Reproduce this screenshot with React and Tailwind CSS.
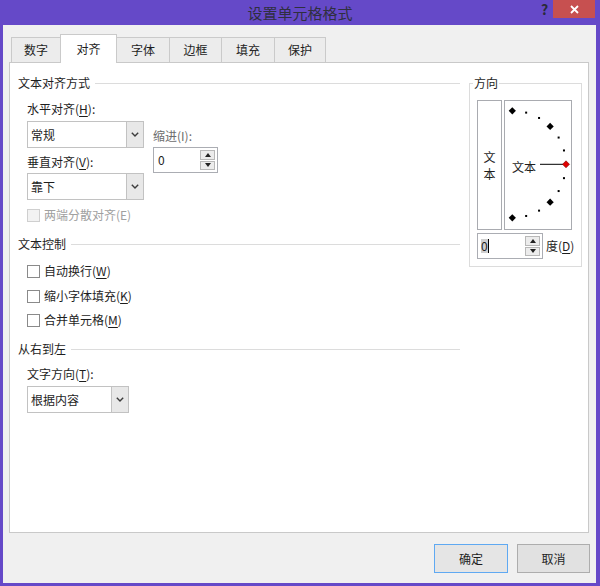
import React from 'react'

const TABS = [
    { label: '数字', cls: 'w-[50px]' },
    { label: '对齐', cls: 'w-[57px] -ml-px', active: true },
    { label: '字体', cls: 'w-[54px] -ml-px' },
    { label: '边框', cls: 'w-[53px] -ml-px' },
    { label: '填充', cls: 'w-[54px] -ml-px' },
    { label: '保护', cls: 'w-[52px] -ml-px' },
]

// underlined access key, e.g. 水平对齐(H)
function Key({ text, k }) {
    return (
        <span>
            {text}(<span className="underline underline-offset-2">{k}</span>)
        </span>
    )
}

function GroupTitle({ children }) {
    return (
        <div className="flex items-center h-[16px]">
            <span>{children}</span>
            <div className="ml-[5px] h-px flex-1 bg-[#dcdcdc]" />
        </div>
    )
}

function Chevron() {
    return (
        <svg width="8" height="5" viewBox="0 0 8 5">
            <path d="M0.8 0.8 L4 4 L7.2 0.8" fill="none" stroke="#3c3c3c" strokeWidth="1.4" />
        </svg>
    )
}

function Select({ value, width }) {
    return (
        <div className={`flex h-[27px] border border-[#c2c2c2] bg-white ${width}`}>
            <div className="flex-1 flex items-center pl-[3px]">{value}</div>
            <div className="w-[17px] flex items-center justify-center border-l border-[#c2c2c2] bg-[#e8e8e8]">
                <Chevron />
            </div>
        </div>
    )
}

function SpinButtons() {
    return (
        <div className="flex flex-col w-[15px] my-[2px] mr-[2px] gap-px">
            <div className="flex-1 flex items-center justify-center border border-[#b8b8b8] bg-[#ececec]">
                <svg width="6" height="4" viewBox="0 0 6 4"><path d="M0 4 L3 0 L6 4 Z" fill="#222" /></svg>
            </div>
            <div className="flex-1 flex items-center justify-center border border-[#b8b8b8] bg-[#ececec]">
                <svg width="6" height="4" viewBox="0 0 6 4"><path d="M0 0 L3 4 L6 0 Z" fill="#222" /></svg>
            </div>
        </div>
    )
}

function Checkbox({ label, disabled }) {
    return (
        <div className="flex items-center h-[16px]">
            <div className={`w-[13px] h-[13px] border ${disabled ? 'border-[#cfcfcf] bg-[#f2f2f2]' : 'border-[#8a8a8a] bg-white'}`} />
            <span className={`ml-[4px] ${disabled ? 'text-[#a0a0a0]' : ''}`}>{label}</span>
        </div>
    )
}

// semicircle of orientation points, center at left edge
function Orientation() {
    const cx = 7.3
    const cy = 63.3
    const r = 53.5
    const pts = []
    for (let a = 90; a >= -90; a -= 15) {
        if (a === 0) continue
        const rad = (a * Math.PI) / 180
        pts.push({ x: cx + r * Math.cos(rad), y: cy - r * Math.sin(rad), big: a % 45 === 0 })
    }
    return (
        <div className="relative w-[68px] h-[130px] border border-[#a9abb0] bg-white">
            <svg className="absolute inset-0" width="66" height="128" viewBox="0 0 66 128">
                {pts.map((p, i) =>
                    p.big ? (
                        <path key={i} d={`M${p.x} ${p.y - 3.6} L${p.x + 3.6} ${p.y} L${p.x} ${p.y + 3.6} L${p.x - 3.6} ${p.y} Z`} fill="#000" />
                    ) : (
                        <rect key={i} x={p.x - 1} y={p.y - 1} width="2" height="2" fill="#000" />
                    )
                )}
                <line x1="35" y1={cy} x2="58" y2={cy} stroke="#000" strokeWidth="1" />
                <path d={`M61 ${cy - 3.5} L64.5 ${cy} L61 ${cy + 3.5} L57.5 ${cy} Z`} fill="#e00000" stroke="#7a0000" strokeWidth="0.6" />
            </svg>
            <span className="absolute left-[7px] top-[58px] leading-[16px]">文本</span>
        </div>
    )
}

export default function App() {
    return (
        <div className="w-[600px] h-[586px] bg-[#6549c8] flex flex-col font-['Noto_Sans_CJK_SC',sans-serif] text-[12px] leading-[16px] text-[#1e1e1e] overflow-hidden">
            {/* title bar */}
            <div className="h-[25px] flex items-start">
                <div className="w-[536px] h-[25px] flex items-center justify-center pl-[64px] text-[15px] text-[#2f2f3f]">
                    设置单元格格式
                </div>
                <div className="w-[17px] h-[18px] flex items-center justify-center font-bold text-[14px] text-[#2a2a3a]">?</div>
                <div className="w-[42px] h-[18px] bg-[#c75050] flex items-center justify-center">
                    <svg width="9" height="9" viewBox="0 0 9 9">
                        <path d="M1 1 L8 8 M8 1 L1 8" stroke="#fff" strokeWidth="1.8" />
                    </svg>
                </div>
            </div>

            {/* body */}
            <div className="ml-[3px] mr-[4px] h-[558px] bg-[#f0f0f0] flex flex-col pt-[9px]">
                <div className="flex items-end h-[28px] ml-[8px]">
                    {TABS.map(t => (
                        <div
                            key={t.label}
                            className={`${t.cls} flex items-center justify-center border-l border-t border-r border-[#cacaca] ${t.active ? 'relative z-10 h-[29px] -mb-px bg-white' : 'h-[25px] bg-[#ececec]'}`}
                        >
                            {t.label}
                        </div>
                    ))}
                </div>

                <div className="ml-[6px] mr-[7px] h-[471px] border border-[#c9c9c9] bg-white flex pl-[8px] pr-[6px]">
                    {/* left column */}
                    <div className="w-[442px] pt-[12px]">
                        <GroupTitle>文本对齐方式</GroupTitle>
                        <div className="pl-[9px]">
                            <div className="flex mt-[10px]">
                                <div className="w-[117px]">
                                    <Key text="水平对齐" k="H" />:
                                    <div className="mt-[4px]">
                                        <Select value="常规" width="w-[117px]" />
                                    </div>
                                    <div className="mt-[6px]">
                                        <Key text="垂直对齐" k="V" />:
                                    </div>
                                    <div className="mt-[3px]">
                                        <Select value="靠下" width="w-[117px]" />
                                    </div>
                                </div>
                                <div className="ml-[9px] mt-[27px]">
                                    <div className="text-[#6d6d6d]">缩进(I):</div>
                                    <div className="mt-[3px] flex w-[65px] h-[26px] border border-[#abadb3] bg-white">
                                        <div className="flex-1 flex items-center pl-[4px]">0</div>
                                        <SpinButtons />
                                    </div>
                                </div>
                            </div>
                            <div className="mt-[7px]">
                                <Checkbox label="两端分散对齐(E)" disabled />
                            </div>
                        </div>

                        <div className="mt-[13px]">
                            <GroupTitle>文本控制</GroupTitle>
                        </div>
                        <div className="pl-[9px]">
                            <div className="mt-[11px]">
                                <Checkbox label={<Key text="自动换行" k="W" />} />
                            </div>
                            <div className="mt-[9px]">
                                <Checkbox label={<Key text="缩小字体填充" k="K" />} />
                            </div>
                            <div className="mt-[8px]">
                                <Checkbox label={<Key text="合并单元格" k="M" />} />
                            </div>
                        </div>

                        <div className="mt-[13px]">
                            <GroupTitle>从右到左</GroupTitle>
                        </div>
                        <div className="pl-[9px]">
                            <div className="mt-[9px]">
                                <Key text="文字方向" k="T" />:
                            </div>
                            <div className="mt-[4px]">
                                <Select value="根据内容" width="w-[102px]" />
                            </div>
                        </div>
                    </div>

                    {/* orientation group */}
                    <div className="ml-[9px] mt-[20px] self-start relative w-[113px] border border-[#dcdcdc] pt-[16px] pl-[7px] pb-[7px]">
                        <span className="absolute left-[3px] -top-[9px] bg-white px-px">方向</span>
                        <div className="flex">
                            <div className="w-[25px] h-[130px] border border-[#a9abb0] bg-white flex flex-col items-center justify-center">
                                <span>文</span>
                                <span className="mt-[1px]">本</span>
                            </div>
                            <div className="ml-[2px]">
                                <Orientation />
                            </div>
                        </div>
                        <div className="flex items-center mt-[3px]">
                            <div className="flex w-[66px] h-[26px] border border-[#abadb3] bg-white">
                                <div className="flex-1 flex items-center pl-[3px]">
                                    <span className="bg-[#cfcfcf] leading-[14px]">0</span>
                                    <span className="w-px h-[14px] bg-black" />
                                </div>
                                <SpinButtons />
                            </div>
                            <span className="ml-[3px]">
                                <Key text="度" k="D" />
                            </span>
                        </div>
                    </div>
                </div>

                <div className="flex justify-end mt-[11px] pr-[6px]">
                    <button className="w-[74px] h-[29px] border border-[#5fa9f2] bg-[#e5e5e5] flex items-center justify-center">确定</button>
                    <button className="ml-[9px] w-[73px] h-[29px] border border-[#adadad] bg-[#e1e1e1] flex items-center justify-center">取消</button>
                </div>
            </div>
        </div>
    )
}
